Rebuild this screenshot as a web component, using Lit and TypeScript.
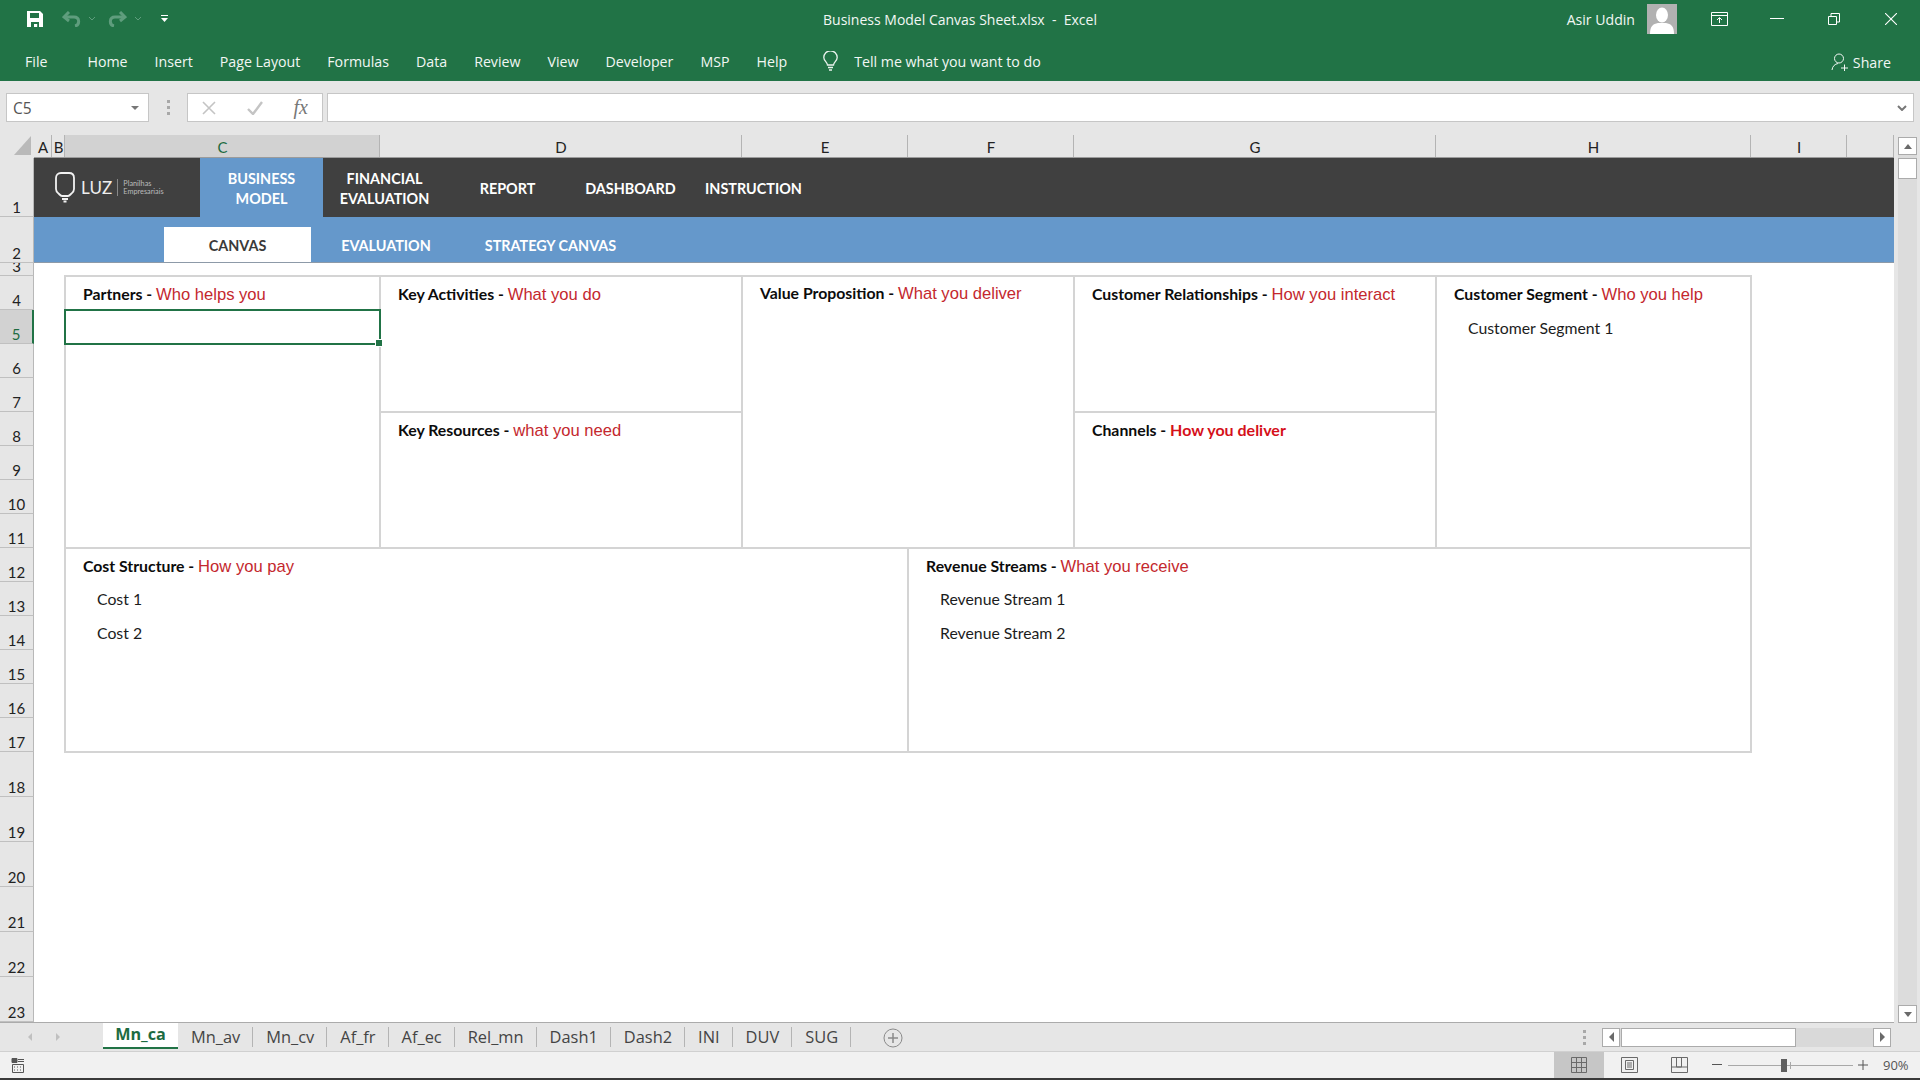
import { LitElement, html, css, svg } from "lit";
import { customElement } from "lit/decorators.js";

const RIBBON = ["Home", "Insert", "Page Layout", "Formulas", "Data", "Review", "View", "Developer", "MSP", "Help"];
const COLS = ["A", "B", "C", "D", "E", "F", "G", "H", "I", ""];
const ROWS = Array.from({ length: 23 }, (_, i) => i + 1);
const TABS = ["Mn_av", "Mn_cv", "Af_fr", "Af_ec", "Rel_mn", "Dash1", "Dash2", "INI", "DUV", "SUG"];

@customElement("app-root")
export class AppRoot extends LitElement {
  static styles = css`
    :host { display: block; width: 1920px; height: 1080px; overflow: hidden; font-family: "Open Sans", "Noto Sans", sans-serif; }
    svg { display: block; }
    .app { display: flex; flex-direction: column; width: 1920px; height: 1080px; background: #e6e6e6; }

    .titlebar { height: 38px; background: #217346; color: #f2f7f4; display: grid; grid-template-columns: 1fr auto 1fr; align-items: center; }
    .qat { display: flex; align-items: center; padding-left: 27px; }
    .qat .redo { margin-left: 13px; }
    .qat .undo { margin-left: 19px; }
    .qat .chev { margin-left: 8px; }
    .qat .more { margin-left: 20px; }
    .doc { font-size: 14px; padding-top: 1px; }
    .right { display: flex; align-items: center; justify-content: flex-end; padding-right: 23px; }
    .uname { font-size: 14.1px; margin-right: 12px; }
    .avatar { width: 30px; height: 30px; background: #b1b1b1; margin-right: 34px; overflow: hidden; }
    .win1 { margin-right: 42px; }
    .win2 { margin-right: 44px; }
    .win3 { margin-right: 45px; }

    .ribbon { height: 43px; background: #217346; color: #f2f7f4; display: flex; align-items: center; font-size: 14.2px; padding: 3px 29px 0 25px; box-sizing: border-box; }
    .file { margin-right: 40px; }
    .rtabs { display: flex; gap: 27px; }
    .bulb { margin-left: 36px; margin-right: 16px; }
    .tell { flex: 1; }
    .share { display: flex; align-items: center; gap: 4px; margin-top: 2px; }

    .fbar { height: 54px; display: flex; align-items: center; padding: 0 6px 1px 6px; box-sizing: border-box; }
    .box { height: 29px; box-sizing: border-box; background: #fff; border: 1px solid #c6c6c6; display: flex; align-items: center; }
    .name { width: 143px; padding: 0 9px 0 6px; justify-content: space-between; font-size: 15.5px; color: #555; }
    .caret { width: 0; height: 0; border-left: 4px solid transparent; border-right: 4px solid transparent; border-top: 4px solid #777; }
    .grip { width: 38px; display: flex; flex-direction: column; align-items: center; gap: 3px; }
    .grip i { width: 3px; height: 3px; background: #a8a8a8; display: block; }
    .fbtns { width: 136px; justify-content: space-between; padding: 0 14px; }
    .fx { font-family: "Liberation Serif", serif; font-style: italic; font-size: 20px; color: #777; }
    .finput { flex: 1; margin-left: 4px; justify-content: flex-end; padding-right: 6px; }

    .main { display: flex; height: 887px; background: #fff; }
    .sheet {
      width: 1894px; display: grid; background: #fff;
      grid-template-columns: 34px 18px 13px 315px 362px 166px 166px 362px 315px 96px 47px;
      grid-template-rows: 23px 59px 46px 13px 34px repeat(13, 34px) repeat(6, 45px);
    }
    .corner { grid-row: 1; grid-column: 1; background: #e6e6e6; display: flex; align-items: flex-end; justify-content: flex-end; padding: 0 3px 3px 0; }
    .ch { grid-row: 1; background: #e6e6e6; display: flex; align-items: center; justify-content: center; font-family: Lato, sans-serif; font-size: 15px; color: #222; position: relative; border-bottom: 1px solid #9b9b9b; box-sizing: border-box; padding-top: 2px; }
    .ch::after { content: ""; position: absolute; right: 0; top: 0; bottom: 0; width: 1px; background: #b4b4b4; }
    .ch.sel { background: #d2d2d2; color: #1d6b41; }
    .rh { grid-column: 1; background: #e6e6e6; display: flex; align-items: flex-end; justify-content: center; font-family: Lato, sans-serif; font-size: 15px; color: #222; line-height: 18px; overflow: hidden; border-bottom: 1px solid #c0c0c0; box-sizing: border-box; border-right: 1px solid #b8b8b8; }
    .rh.sel { background: #d2d2d2; color: #1d6b41; border-right: 2px solid #217346; }

    .nav { grid-area: 2 / 2 / 3 / 12; background: #404040; display: flex; padding-left: 166px; position: relative; color: #fff; font-family: Lato, sans-serif; font-weight: 700; font-size: 14.4px; line-height: 20px; text-align: center; }
    .nav div.item { width: 123px; display: flex; align-items: center; justify-content: center; padding-top: 2px; box-sizing: border-box; }
    .nav div.on { background: #6598cb; }
    .logo { position: absolute; left: 21px; top: 14px; display: flex; align-items: center; font-weight: 400; color: #eee; text-align: left; }
    .luz { font-size: 17px; margin-left: 6px; letter-spacing: 0.1px; line-height: 20px; margin-top: 0; }
    .lsep { width: 1px; height: 17px; background: #888; margin: 0 5px 0 5px; }
    .lsub { font-size: 7.3px; line-height: 7.5px; color: #bbb; margin-top: 0; }
    .subnav { grid-area: 3 / 2 / 4 / 12; background: #6598cb; display: flex; align-items: flex-end; padding-left: 130px; color: #fff; font-family: Lato, sans-serif; font-weight: 700; font-size: 14.4px; border-bottom: 1px solid #8d9aa8; box-sizing: border-box; }
    .subnav div { height: 35px; display: flex; align-items: center; justify-content: center; padding-top: 2px; box-sizing: border-box; }
    .s1 { width: 147px; background: #fff; color: #3a3a3a; }
    .s2 { width: 150px; }
    .s3 { width: 179px; }

    .cell { box-shadow: 0 0 0 1px #d4d4d4, inset 0 0 0 1px #d4d4d4; font-family: Lato, sans-serif; font-size: 15.8px; color: #111; padding-left: 18px; box-sizing: border-box; }
    .t { height: 34px; line-height: 35px; font-weight: 700; color: #0c0c0c; white-space: nowrap; }
    .t span { font-family: "Liberation Sans", sans-serif; font-weight: 400; font-size: 16.6px; color: #c4282e; }
    .t span.b { font-family: Lato, sans-serif; font-weight: 700; font-size: 16px; color: #d5101a; }
    .i { height: 34px; line-height: 34px; padding-left: 14px; color: #1c1c1c; }
    .top { padding-top: 1px; }
    .top .t { line-height: 33px; }
    .top .t.v { line-height: 31px; }
    .partners { grid-area: 5 / 4 / 13 / 5; }
    .activities { grid-area: 5 / 5 / 9 / 6; }
    .resources { grid-area: 9 / 5 / 13 / 6; }
    .value { grid-area: 5 / 6 / 13 / 8; }
    .rel { grid-area: 5 / 8 / 9 / 9; }
    .channels { grid-area: 9 / 8 / 13 / 9; }
    .segment { grid-area: 5 / 9 / 13 / 10; }
    .cost { grid-area: 13 / 4 / 19 / 7; }
    .revenue { grid-area: 13 / 7 / 19 / 10; }
    .selection { grid-area: 6 / 4 / 7 / 5; border: 2px solid #217346; margin: -1px -1px -1px -1px; position: relative; }
    .handle { position: absolute; right: -4px; bottom: -4px; width: 6px; height: 6px; background: #217346; border: 1px solid #fff; box-sizing: content-box; }

    .vscroll { width: 26px; background: #e6e6e6; padding: 2px 3px 0 4px; box-sizing: border-box; display: flex; flex-direction: column; height: 888px; z-index: 1; }
    .vtrack { flex: 1; background: #dcdcdc; display: flex; flex-direction: column; }
    .sbtn { background: #fff; border: 1px solid #ababab; box-sizing: border-box; display: flex; align-items: center; justify-content: center; flex: none; }
    .vbtn { width: 19px; height: 18px; }
    .vbtn.end { margin-top: auto; }
    .vthumb { width: 19px; height: 21px; margin-top: 3px; background: #fff; border: 1px solid #ababab; box-sizing: border-box; }
    .up { border-left: 4.5px solid transparent; border-right: 4.5px solid transparent; border-bottom: 5px solid #6a6a6a; }
    .dn { border-left: 4.5px solid transparent; border-right: 4.5px solid transparent; border-top: 5px solid #6a6a6a; }
    .lt { border-top: 5px solid transparent; border-bottom: 5px solid transparent; border-right: 5px solid #6a6a6a; }
    .rt { border-top: 5px solid transparent; border-bottom: 5px solid transparent; border-left: 5px solid #6a6a6a; }

    .tabsbar { height: 30px; display: flex; background: #e6e6e6; border-top: 1px solid #ababab; box-sizing: border-box; border-bottom: 1px solid #d0d0d0; }
    .tnav { width: 103px; display: flex; align-items: center; padding-left: 28px; gap: 24px; box-sizing: border-box; }
    .ltlight { border-top: 4px solid transparent; border-bottom: 4px solid transparent; border-right: 4px solid #c0c0c0; }
    .rtlight { border-top: 4px solid transparent; border-bottom: 4px solid transparent; border-left: 4px solid #c0c0c0; }
    .tabs { display: flex; height: 26px; font-size: 16.4px; color: #444; }
    .tab { display: flex; align-items: center; padding: 0 13px 6px; position: relative; white-space: nowrap; margin-top: 2px; height: 22px; }
    .tab::after { content: ""; position: absolute; right: 0; top: 2px; height: 20px; width: 1px; background: #b4b4b4; }
    .tab.active { width: 75px; box-sizing: border-box; background: #fff; color: #1d6b41; font-weight: 700; margin-top: 0; height: 26px; padding: 0 0 2px; justify-content: center; border-bottom: 2px solid #217346; font-size: 16.2px; }
    .tab.active::after { display: none; }
    .add { margin: 5px 0 0 32px; }
    .hscroll { margin-left: auto; display: flex; align-items: center; padding-right: 29px; }
    .dots { display: flex; flex-direction: column; gap: 3px; margin-right: 16px; }
    .dots i { width: 3px; height: 3px; background: #a8a8a8; display: block; }
    .hbtn { width: 18px; height: 19px; }
    .htrack { width: 253px; height: 19px; background: #d9d9d9; }
    .hthumb { width: 175px; height: 19px; margin-left: 1px; background: #fff; border: 1px solid #ababab; box-sizing: border-box; }

    .status { height: 26px; background: #f1f1f1; display: flex; align-items: center; padding-left: 11px; }
    .views { margin-left: auto; display: flex; align-items: stretch; height: 26px; }
    .view { width: 50px; display: flex; align-items: center; justify-content: center; }
    .view.on { background: #c6c6c6; }
    .zoom { display: flex; align-items: center; width: 216px; color: #555; }
    .zm { margin-left: 8px; }
    .slider { width: 125px; height: 1px; background: #a8a8a8; margin-left: 6px; position: relative; }
    .thumb { position: absolute; left: 53px; top: -6px; width: 6px; height: 13px; background: #5f5f5f; }
    .tick { position: absolute; left: 62px; top: -3px; width: 1px; height: 7px; background: #a8a8a8; }
    .zp { margin-left: 5px; }
    .pct { font-size: 13px; color: #555; margin-left: 15px; }
    .strip { height: 2px; background: #3a3a3a; }
  `;

  private cell(cls: string, black: string, red: string, items: string[] = [], redCls = "") {
    return html`<div class="cell ${cls}"><div class="t ${cls.includes("value") ? "v" : ""}">${black} - <span class=${redCls}>${red}</span></div>${items.map((x) => html`<div class="i">${x}</div>`)}</div>`;
  }

  private titlebar() {
    return html`<div class="titlebar">
      <div class="qat">
        <svg width="16" height="16" viewBox="0 0 16 16"><path fill="#fff" d="M0 0h13l3 3v13H0z"/><path fill="#217346" d="M3 2h9v5H3zM4 11h8v5h-1.800v-3H7v3H4z"/></svg>
        <svg class="undo" width="19" height="16" viewBox="0 0 19 16" fill="none" stroke="#5f9d7d" stroke-width="3"><path d="M2 6h10c6 0 6 8 1 9"/><path d="M7 1 2 6l5 4"/></svg>
        <svg class="chev" width="6" height="4" viewBox="0 0 6 4" fill="none" stroke="#5f9d7d"><path d="m0 0 3 3 3-3"/></svg>
        <svg class="redo" width="19" height="16" viewBox="0 0 19 16" fill="none" stroke="#5f9d7d" stroke-width="3"><path d="M17 6H7C1 6 1 14 6 15"/><path d="m12 1 5 5-5 4"/></svg>
        <svg class="chev" width="6" height="4" viewBox="0 0 6 4" fill="none" stroke="#5f9d7d"><path d="m0 0 3 3 3-3"/></svg>
        <svg class="more" width="7" height="8" viewBox="0 0 7 8" fill="#fff"><path d="M0 0h7v1H0zM0 3h7L3.500 7z"/></svg>
      </div>
      <div class="doc">Business Model Canvas Sheet.xlsx&nbsp; - &nbsp;Excel</div>
      <div class="right">
        <span class="uname">Asir Uddin</span>
        <div class="avatar"><svg width="30" height="30" viewBox="0 0 30 30" fill="#fff"><ellipse cx="15" cy="11" rx="6" ry="7.500"/><path d="M3 30c0-8 3-10 8-11h8c5 1 8 3 8 11z"/></svg></div>
        <svg class="win1" width="17" height="14" viewBox="0 0 17 14" fill="none" stroke="#fff"><path d="M.5.500h16v13H.5zM.5 3.500h16"/><path d="M8.500 11V6M6 8l2.500-2.500L11 8"/></svg>
        <svg class="win2" width="14" height="2" viewBox="0 0 14 2" fill="#fff"><path d="M0 0h14v1H0z"/></svg>
        <svg class="win3" width="12" height="12" viewBox="0 0 12 12" fill="none" stroke="#fff"><path d="M.5 3.500h8v8h-8zM3 3.500V.5h8.500V9H8.500"/></svg>
        <svg width="12" height="12" viewBox="0 0 12 12" stroke="#fff" stroke-width="1.100"><path d="m0 0 12 12M12 0 0 12"/></svg>
      </div>
    </div>`;
  }

  private ribbon() {
    return html`<div class="ribbon">
      <span class="file">File</span>
      <div class="rtabs">${RIBBON.map((t) => html`<span>${t}</span>`)}</div>
      <svg class="bulb" width="15" height="20" viewBox="0 0 15 20" fill="none" stroke="#eaf3ee" stroke-width="1.300"><path d="M4.500 14c0-3-3.700-4-3.700-7.500a6.700 6.700 0 0 1 13.400 0c0 3.500-3.700 4.500-3.700 7.500z"/><path d="M5 16.500h5M6 19h3"/></svg>
      <span class="tell">Tell me what you want to do</span>
      <div class="share">
        <svg width="18" height="18" viewBox="0 0 18 18" fill="none" stroke="#f2f7f4"><circle cx="8" cy="5.500" r="4.500"/><path d="M1 17c.500-4 3-6 6-6.500M10 15h7M13.500 11.500v7"/></svg>
        <span>Share</span>
      </div>
    </div>`;
  }

  private fbar() {
    return html`<div class="fbar">
      <div class="box name"><span>C5</span><span class="caret"></span></div>
      <div class="grip"><i></i><i></i><i></i></div>
      <div class="box fbtns">
        <svg width="14" height="14" viewBox="0 0 14 14" stroke="#c4c4c4" stroke-width="1.600"><path d="m1 1 12 12M13 1 1 13"/></svg>
        <svg width="16" height="14" viewBox="0 0 16 14" fill="none" stroke="#c4c4c4" stroke-width="2.400"><path d="m1 8 5 5L15 1"/></svg>
        <span class="fx">fx</span>
      </div>
      <div class="box finput"><svg width="10" height="6" viewBox="0 0 10 6" fill="none" stroke="#777" stroke-width="2"><path d="m1 1 4 4 4-4"/></svg></div>
    </div>`;
  }

  private logo() {
    return html`<div class="logo">
      <svg width="20" height="31" viewBox="0 0 20 31" fill="none" stroke="#f2f2f2" stroke-width="1.800"><path d="M6 1h8c3 0 5 2 5 5v11c0 3-2 4-3 5s-2 2-3 2H7c-1 0-2-1-3-2s-3-2-3-5V6c0-3 2-5 5-5z"/><path d="M7 27h6M8.500 29.500h3"/></svg>
      <span class="luz">LUZ</span>
      <span class="lsep"></span>
      <span class="lsub">Planilhas<br />Empresariais</span>
    </div>`;
  }

  private sheet() {
    return html`<div class="sheet">
      <div class="corner"><svg width="17" height="19" viewBox="0 0 17 19" fill="#b9b9b9"><path d="M17 0v19H0z"/></svg></div>
      ${COLS.map((c) => html`<div class="ch ${c === "C" ? "sel" : ""}">${c}</div>`)}
      ${ROWS.map((r) => html`<div class="rh ${r === 5 ? "sel" : ""}" style="grid-row:${r + 1}">${r}</div>`)}
      <div class="nav">
        ${this.logo()}
        <div class="item on">BUSINESS<br />MODEL</div>
        <div class="item">FINANCIAL<br />EVALUATION</div>
        <div class="item">REPORT</div>
        <div class="item">DASHBOARD</div>
        <div class="item">INSTRUCTION</div>
      </div>
      <div class="subnav"><div class="s1">CANVAS</div><div class="s2">EVALUATION</div><div class="s3">STRATEGY CANVAS</div></div>
      ${this.cell("partners top", "Partners", "Who helps you")}
      ${this.cell("activities top", "Key Activities", "What you do")}
      ${this.cell("resources", "Key Resources", "what you need")}
      ${this.cell("value top", "Value Proposition", "What you deliver")}
      ${this.cell("rel top", "Customer Relationships", "How you interact")}
      ${this.cell("channels", "Channels", "How you deliver", [], "b")}
      ${this.cell("segment top", "Customer Segment", "Who you help", ["Customer Segment 1"])}
      ${this.cell("cost", "Cost Structure", "How you pay", ["Cost 1", "Cost 2"])}
      ${this.cell("revenue", "Revenue Streams", "What you receive", ["Revenue Stream 1", "Revenue Stream 2"])}
      <div class="selection"><div class="handle"></div></div>
    </div>`;
  }

  private tabsbar() {
    return html`<div class="tabsbar">
      <div class="tnav"><i class="ltlight"></i><i class="rtlight"></i></div>
      <div class="tabs">
        <div class="tab active">Mn_ca</div>
        ${TABS.map((t) => html`<div class="tab">${t}</div>`)}
      </div>
      <svg class="add" width="20" height="20" viewBox="0 0 20 20" fill="none" stroke="#8a8a8a"><circle cx="10" cy="10" r="9"/><path d="M10 5v10M5 10h10" stroke-width="1.500"/></svg>
      <div class="hscroll">
        <div class="dots"><i></i><i></i><i></i></div>
        <div class="sbtn hbtn"><i class="lt"></i></div>
        <div class="htrack"><div class="hthumb"></div></div>
        <div class="sbtn hbtn"><i class="rt"></i></div>
      </div>
    </div>`;
  }

  private status() {
    const gridLines = svg`<path d="M.5.500h15v15H.5zM5.500.5v15M10.500.5v15M.5 5.500h15M.5 10.500h15"/>`;
    return html`<div class="status">
      <svg width="14" height="15" viewBox="0 0 14 15" fill="none" stroke="#555"><path d="M1 .5h5v4H1z" fill="#555"/><path d="M7 1.500h6M7 3.500h6"/><path d="M1.500 6.500h11v8h-11z"/><path d="M3 9h1M6 9h1M9 9h1M3 12h1M6 12h1M9 12h1"/></svg>
      <div class="views">
        <div class="view on"><svg width="16" height="16" viewBox="0 0 16 16" fill="none" stroke="#6a6a6a">${gridLines}</svg></div>
        <div class="view"><svg width="17" height="16" viewBox="0 0 17 16" fill="none" stroke="#6a6a6a"><path d="M.5.500h16v15H.5zM4.500 3.500h8v9h-8zM6 6h5M6 8h5M6 10h5"/></svg></div>
        <div class="view"><svg width="17" height="16" viewBox="0 0 17 16" fill="none" stroke="#6a6a6a"><path d="M.5.500h16v15H.5zM5.500.5v9.500h5V.5M.5 10h16"/></svg></div>
      </div>
      <div class="zoom">
        <svg class="zm" width="10" height="2" viewBox="0 0 10 2" fill="#555"><path d="M0 0h10v1H0z"/></svg>
        <div class="slider"><div class="thumb"></div><div class="tick"></div></div>
        <svg class="zp" width="10" height="10" viewBox="0 0 10 10" stroke="#555"><path d="M0 5h10M5 0v10"/></svg>
        <span class="pct">90%</span>
      </div>
    </div>`;
  }

  render() {
    return html`<div class="app">
      ${this.titlebar()}
      ${this.ribbon()}
      ${this.fbar()}
      <div class="main">
        ${this.sheet()}
        <div class="vscroll">
          <div class="vtrack">
            <div class="sbtn vbtn"><i class="up"></i></div>
            <div class="vthumb"></div>
            <div class="sbtn vbtn end"><i class="dn"></i></div>
          </div>
        </div>
      </div>
      ${this.tabsbar()}
      ${this.status()}
      <div class="strip"></div>
    </div>`;
  }
}
